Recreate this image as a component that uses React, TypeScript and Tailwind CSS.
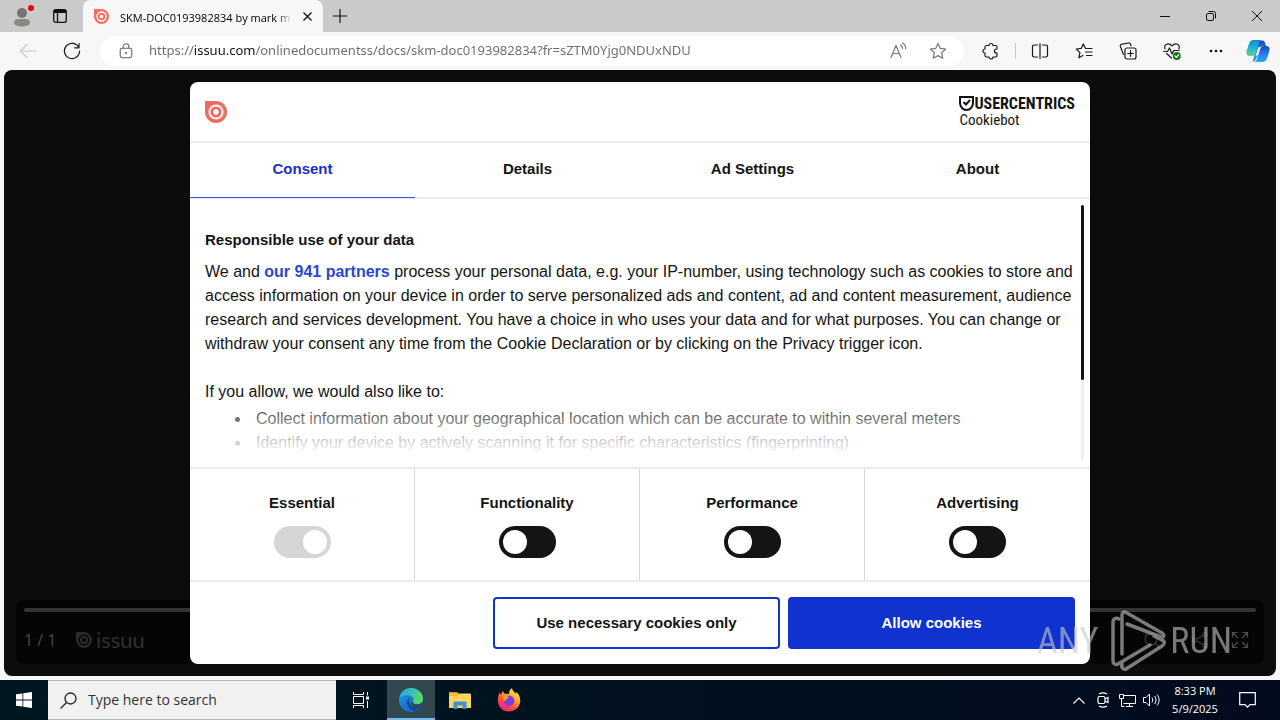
import { useState } from 'react';
import type { ReactNode } from 'react';

const tabs = ['Consent', 'Details', 'Ad Settings', 'About'];

const categories = [
  { name: 'Essential', locked: true },
  { name: 'Functionality', locked: false },
  { name: 'Performance', locked: false },
  { name: 'Advertising', locked: false },
];

interface IconButtonProps {
  label: string;
  className?: string;
  children: ReactNode;
}

function IconButton({ label, className = '', children }: IconButtonProps) {
  return (
    <button type="button" aria-label={label} className={`flex shrink-0 items-center justify-center ${className}`}>
      {children}
    </button>
  );
}

function IssuuMark({ className }: { className: string }) {
  return (
    <svg viewBox="0 0 22 22" className={className} fill="none" aria-hidden="true">
      <path d="M0 0h11a11 11 0 1 1-11 11z" fill="currentColor" />
      <circle cx="11" cy="11" r="6.6" stroke="var(--ring)" strokeWidth="2" />
      <circle cx="11" cy="11" r="2.7" fill="var(--ring)" />
    </svg>
  );
}

// Outline icons of the browser share one stroke setup
function Line({ size = 18, children, className = '' }: { size?: number; children: ReactNode; className?: string }) {
  return (
    <svg
      width={size}
      height={size}
      viewBox="0 0 18 18"
      fill="none"
      stroke="currentColor"
      strokeWidth="1.2"
      strokeLinecap="round"
      strokeLinejoin="round"
      className={className}
      aria-hidden="true"
    >
      {children}
    </svg>
  );
}

function TitleBar() {
  return (
    <header className="flex h-8 items-stretch bg-[#cacaca]">
      <div className="flex w-[83px] shrink-0 items-center rounded-br-md">
        <IconButton label="Profile" className="h-8 w-11">
          <svg width="24" height="24" viewBox="0 0 24 24" aria-hidden="true">
            <circle cx="12" cy="9" r="5" fill="#77736f" />
            <path d="M4 19c0-3 2-4 4-4h8c2 0 4 1 4 4 0 2-4 3.500-8 3.500S4 21 4 19z" fill="#8b8783" />
            <circle cx="21" cy="4" r="3" fill="#e00b0b" />
          </svg>
        </IconButton>
        <IconButton label="Tab actions" className="h-8 w-8">
          <svg width="14" height="14" viewBox="0 0 14 14" fill="none" stroke="#111" aria-hidden="true">
            <rect x="0.700" y="0.700" width="12.600" height="12.600" rx="2" strokeWidth="1.300" />
            <path d="M1 2.500h12" strokeWidth="3" />
            <path d="M4.500 3v10" strokeWidth="1.300" />
          </svg>
        </IconButton>
      </div>
      <div className="flex w-60 items-center rounded-t-lg bg-[#f7f7f7] pr-2 pl-[11px]">
        <IssuuMark className="size-[15px] shrink-0 text-[#f2705f] [--ring:#fff]" />
        <span className="ml-[11px] flex-1">
          <span className="bg-linear-to-r from-black from-91% to-[#e0e0e0] bg-clip-text text-[11px] whitespace-nowrap text-transparent">
            SKM-DOC0193982834 by mark m
          </span>
        </span>
        <IconButton label="Close tab" className="size-4">
          <svg width="9" height="9" viewBox="0 0 9 9" stroke="#111" strokeWidth="1.3" aria-hidden="true">
            <path d="M0.500 0.500l8 8M8.500 0.500l-8 8" />
          </svg>
        </IconButton>
      </div>
      <IconButton label="New tab" className="ml-px w-8">
        <svg width="14" height="14" viewBox="0 0 14 14" stroke="#111" strokeWidth="1.2" aria-hidden="true">
          <path d="M7 0v14M0 7h14" />
        </svg>
      </IconButton>
      <div className="ml-auto flex">
        <IconButton label="Minimize" className="w-[46px]">
          <svg width="10" height="10" viewBox="0 0 10 10" stroke="#111" aria-hidden="true">
            <path d="M0 5.500h10" />
          </svg>
        </IconButton>
        <IconButton label="Restore" className="w-[46px]">
          <svg width="10" height="10" viewBox="0 0 10 10" fill="none" stroke="#111" aria-hidden="true">
            <rect x="0.500" y="2.500" width="7" height="7" rx="1.500" />
            <path d="M2.500 0.500h5a2 2 0 0 1 2 2v5" />
          </svg>
        </IconButton>
        <IconButton label="Close" className="w-[46px]">
          <svg width="10" height="10" viewBox="0 0 10 10" stroke="#111" aria-hidden="true">
            <path d="M0 0l10 10M10 0L0 10" />
          </svg>
        </IconButton>
      </div>
    </header>
  );
}

function Toolbar() {
  return (
    <div className="flex h-[38px] items-center text-[#1b1b1b]">
      <IconButton label="Back" className="ml-1.5 w-11 text-[#c9c9c9]">
        <Line>
          <path d="M17 9H1.500M8 2.500L1.500 9 8 15.500" />
        </Line>
      </IconButton>
      <IconButton label="Refresh" className="w-11">
        <Line>
          <path d="M15.800 5.500A7.600 7.600 0 1 0 16.600 9M16 1.500v4.300h-4.300" />
        </Line>
      </IconButton>
      <div className="ml-1.5 flex h-[30px] flex-1 items-center rounded-full bg-white pr-1.5 pl-[18px]">
        <Line size={16} className="shrink-0 text-[#666]">
          <rect x="2.500" y="6" width="13" height="10.500" rx="1.800" />
          <path d="M5.800 6V4a3.200 3.200 0 0 1 6.400 0v2" />
          <circle cx="9" cy="11.200" r="0.500" fill="currentColor" />
        </Line>
        <input
          aria-label="Address"
          defaultValue="https://issuu.com/onlinedocumentss/docs/skm-doc0193982834?fr=sZTM0Yjg0NDUxNDU"
          className="ml-[15px] min-w-0 flex-1 bg-[linear-gradient(90deg,#6b6b6b_45px,#111_45px,#111_106px,#6b6b6b_106px)] bg-clip-text font-['Noto_Sans','Open_Sans',sans-serif] text-[13px] text-transparent outline-none"
        />
        <IconButton label="Read aloud" className="w-10 text-[#777]">
          <Line>
            <path d="M2 15.500L7 3.500l5 12M3.800 11.500h6.400M11.500 3c1.400.8 2 2.200 2 3.800M13.500 1c2.200 1.200 3.200 3.200 3.200 5.800" />
          </Line>
        </IconButton>
        <IconButton label="Add to favorites" className="w-10 text-[#777]">
          <Line>
            <path d="M9 1.500l2.300 4.900 5.300.7-3.900 3.700 1 5.400L9 13.600l-4.700 2.600 1-5.400L1.400 7.100l5.300-.7z" />
          </Line>
        </IconButton>
      </div>
      <div className="ml-[5px] flex items-center pr-0.5">
        <IconButton label="Extensions" className="w-11">
          <Line>
            <path d="M4.500 3.500H7a2 2 0 0 1 4 0h2.500a1.500 1.500 0 0 1 1.500 1.500v2h-.5a2 2 0 0 0 0 4h.5v2.500a1.500 1.500 0 0 1-1.500 1.500H11a2 2 0 0 1-4 0H4.500A1.500 1.500 0 0 1 3 13.500V11a2 2 0 0 1 0-4V5a1.500 1.500 0 0 1 1.500-1.500z" />
          </Line>
        </IconButton>
        <span className="mx-0.5 h-4 w-px bg-[#c9c9c9]" />
        <IconButton label="Split screen" className="w-11">
          <Line>
            <path d="M9 1.500v15M6.500 3H3.200A1.700 1.700 0 0 0 1.500 4.700v8.600A1.700 1.700 0 0 0 3.200 15h3.300M11.500 3h3.300a1.700 1.700 0 0 1 1.700 1.700v8.600a1.700 1.700 0 0 1-1.700 1.700h-3.300" />
          </Line>
        </IconButton>
        <IconButton label="Favorites" className="w-11">
          <Line>
            <path d="M11 6.500h-.5L8.300 2 6.200 6.400 1.300 7l3.600 3.600-1 5.200 4-2.300M12 6.500h5M10.500 10h6.500M11.500 13.500H17" />
          </Line>
        </IconButton>
        <IconButton label="Collections" className="w-11">
          <Line>
            <rect x="6" y="6" width="11" height="11" rx="2" />
            <path d="M11.500 8.700v5.600M8.700 11.500h5.600M4.500 12.500L1.300 4.300c-.3-1 .1-1.700 1-2L9.500 1c1-.2 1.700.3 2 1.200l.5 1.500" />
          </Line>
        </IconButton>
        <IconButton label="Browser essentials" className="w-11">
          <Line>
            <path d="M2 7C.8 3.500 3 1.800 5 1.800c2 0 3.200 1 4 2.200.8-1.200 2-2.200 4-2.200s4.200 1.700 3 5.200M.8 9.500h3.700L6.500 6l2.500 6 1.700-3.500h5.500M3.500 11.500L8.500 16" />
            <circle cx="13.800" cy="14" r="4" fill="#157a1c" stroke="none" />
            <path d="M12 14l1.300 1.300 2.300-2.400" stroke="#fff" />
          </Line>
        </IconButton>
        <IconButton label="Settings and more" className="w-11">
          <svg width="14" height="4" viewBox="0 0 14 4" fill="#111" aria-hidden="true">
            <circle cx="2" cy="2" r="1.300" />
            <circle cx="7" cy="2" r="1.300" />
            <circle cx="12" cy="2" r="1.300" />
          </svg>
        </IconButton>
        <IconButton label="Copilot" className="w-10">
          <svg width="24" height="24" viewBox="0 0 24 24" aria-hidden="true">
            <defs>
              <linearGradient id="cpA" x1="0" y1="0" x2="0" y2="1">
                <stop offset="0" stopColor="#1187d8" />
                <stop offset="0.500" stopColor="#23b5d3" />
                <stop offset="1" stopColor="#58d08b" />
              </linearGradient>
              <linearGradient id="cpB" x1="0" y1="0" x2="0" y2="1">
                <stop offset="0" stopColor="#1748b5" />
                <stop offset="0.500" stopColor="#2b7bea" />
                <stop offset="1" stopColor="#2aa7f5" />
              </linearGradient>
            </defs>
            <path d="M13 1.500h3.500c1.500 0 2.100 1 2.500 2.300L20 7h-3c-2 0-2.600 1-3.200 2.600L10.500 19c-.8 2.500-2 3.500-4 3.500" fill="url(#cpB)" />
            <path d="M7.500 1H16c-1.800.3-2.400 1.400-3 3.200l-3 9.300C9.200 16 8 17 6 17H3.500C.7 17-.1 14.600.8 11.500L3 4.800C3.800 2.300 5.200 1 7.500 1z" fill="url(#cpA)" />
            <path d="M16.500 23H8c1.800-.3 2.400-1.400 3-3.200l3-9.300C14.800 8 16 7 18 7h2.500c2.800 0 3.600 2.400 2.700 5.500L21 19.200c-.8 2.500-2.200 3.800-4.500 3.800z" fill="url(#cpB)" />
            <path d="M12.600 8h2l-3 8.500h-2z" fill="#eef6ff" />
          </svg>
        </IconButton>
      </div>
    </div>
  );
}

function ReaderControls() {
  return (
    <div className="m-3 flex h-16 flex-col rounded-lg bg-[#050505] px-2 pt-2 text-[#3a3a3a]">
      <div className="h-1 rounded-full bg-[#333]" />
      <div className="flex flex-1 items-center pt-1">
        <span className="w-[52px] text-base text-[#4a4a4a]">1 / 1</span>
        <IssuuMark className="size-4 text-[#2b2b2b] [--ring:#050505]" />
        <span className="ml-1 font-[Lato] text-[22px] leading-5 text-[#2f2f2f]">issuu</span>
        <div className="ml-auto flex">
          <IconButton label="Zoom" className="w-12">
            <Line>
              <circle cx="8" cy="8" r="6" />
              <path d="M12.500 12.500L17 17" />
            </Line>
          </IconButton>
          <IconButton label="Share" className="w-12">
            <Line>
              <circle cx="3.500" cy="9" r="2" />
              <circle cx="14" cy="3.500" r="2" />
              <circle cx="14" cy="14.500" r="2" />
              <path d="M5.500 8L12 4.500M5.500 10l6.500 3.500" />
            </Line>
          </IconButton>
          <IconButton label="Fullscreen" className="w-8">
            <Line className="text-[#505050]">
              <path d="M1.500 6V1.500H6M1.500 1.500l5 5M12 1.500h4.500V6M16.500 1.500l-5 5M1.500 12v4.500H6M1.500 16.500l5-5M12 16.500h4.500V12M16.500 16.500l-5-5" />
            </Line>
          </IconButton>
        </div>
      </div>
    </div>
  );
}

function CookieDialog() {
  const [active, setActive] = useState('Consent');

  return (
    <div
      role="dialog"
      aria-label="Cookie consent"
      className="w-full max-w-[900px] overflow-hidden rounded-lg bg-white font-['Liberation_Sans',Arial,sans-serif] text-[15px] leading-6 text-[#141414]"
    >
      <div className="flex h-[61px] items-center justify-between border-b-2 border-[#ebebeb] px-[15px]">
        <IssuuMark className="size-[22px] text-[#ee6a62] [--ring:#fff]" />
        <a href="#cookiebot" className="flex flex-col" aria-label="Usercentrics Cookiebot">
          <span className="flex items-center">
            <svg width="15" height="15" viewBox="0 0 15 15" fill="none" stroke="#141414" strokeWidth="2" aria-hidden="true">
              <path d="M1 1h13v6c0 4-3 7-6.500 7S1 11 1 7z" />
              <path d="M4.500 6l2.500 2.500L11 4" />
            </svg>
            <span className="font-['Roboto_Condensed','Liberation_Sans_Narrow','Roboto',sans-serif] text-base leading-4 font-bold">
              USERCENTRICS
            </span>
          </span>
          <span className="font-['Roboto_Condensed','Liberation_Sans_Narrow','Roboto',sans-serif] text-[15px] leading-4">
            Cookiebot
          </span>
        </a>
      </div>

      <div role="tablist" className="grid grid-cols-4 border-b-2 border-[#ebebeb]">
        {tabs.map((tab) => (
          <button
            key={tab}
            type="button"
            role="tab"
            aria-selected={active === tab}
            onClick={() => setActive(tab)}
            className={`-mb-px h-[55px] border-b pb-0.5 font-bold ${
              active === tab ? 'border-b-[#3d4fe0] text-[#1e2fc4]' : 'border-b-transparent'
            }`}
          >
            {tab}
          </button>
        ))}
      </div>

      <div className="relative flex h-[268px] overflow-hidden">
        <div className="flex-1 pt-[29px] pl-[15px]">
          <h2 className="mb-2 font-bold">Responsible use of your data</h2>
          <p className="text-base leading-6">
            We and{' '}
            <a href="#partners" className="font-bold text-[#2a47cf]">
              our 941 partners
            </a>{' '}
            process your personal data, e.g. your IP-number, using technology such as cookies to store and access
            information on your device in order to serve personalized ads and content, ad and content measurement,
            audience research and services development. You have a choice in who uses your data and for what purposes.
            You can change or withdraw your consent any time from the Cookie Declaration or by clicking on the Privacy
            trigger icon.
          </p>
          <p className="mt-6 text-base leading-6">If you allow, we would also like to:</p>
          <ul className="mt-[3px] list-disc pl-[46px] text-base leading-6">
            <li className="pl-[5px]">
              Collect information about your geographical location which can be accurate to within several meters
            </li>
            <li className="pl-[5px]">
              Identify your device by actively scanning it for specific characteristics (fingerprinting)
            </li>
          </ul>
        </div>
        <div className="mt-1.5 mr-1.5 mb-1.5 ml-1 w-[3px] rounded-full bg-[#f0f0f0]">
          <div className="h-[175px] rounded-full bg-[#141414]" />
        </div>
        <div className="pointer-events-none absolute right-4 bottom-0 left-0 h-[72px] bg-linear-to-t from-white from-18% to-white/0" />
      </div>

      <div className="grid grid-cols-4 border-y-2 border-[#ebebeb]">
        {categories.map(({ name, locked }) => (
          <label
            key={name}
            className="flex h-[111px] flex-col items-center gap-[11px] border-r border-[#d6d6d6] pt-[22px] font-bold last:border-r-0"
          >
            {name}
            <input
              type="checkbox"
              role="switch"
              defaultChecked={locked}
              disabled={locked}
              className="h-8 w-[57px] appearance-none rounded-full bg-[#141414] p-1 before:block before:size-6 before:rounded-full before:bg-white before:content-[''] checked:before:ml-auto disabled:bg-[#d6d6d6]"
            />
          </label>
        ))}
      </div>

      <div className="flex justify-end gap-2 px-[15px] pt-[15px] pb-[15px]">
        <button type="button" className="h-[52px] w-[287px] rounded border-2 border-[#1032cf] font-bold">
          Use necessary cookies only
        </button>
        <button type="button" className="h-[52px] w-[287px] rounded bg-[#1032cf] font-bold text-white">
          Allow cookies
        </button>
      </div>
    </div>
  );
}

function Watermark() {
  return (
    <div className="pointer-events-none absolute right-11 bottom-1 flex items-center gap-1 font-['Roboto_Condensed','Liberation_Sans_Narrow','Liberation_Sans',sans-serif] text-4xl text-[#c8c8c8] opacity-60">
      <span className="mr-2">ANY</span>
      <svg width="56" height="62" viewBox="0 0 56 62" fill="none" stroke="currentColor" strokeWidth="3.500" strokeLinejoin="round" strokeLinecap="round" aria-hidden="true">
        <path d="M9 9c-3-2-6 0-6 3v39c0 3 3 4 5 3l32-19" />
        <path d="M12 44V5c0-3 2-4 5-2l35 20c3 2 2 5-1 4L17 14" />
        <path d="M12 54c-1 3 1 6 4 5l36-23c3-2 3-5 0-6l-8-4" />
      </svg>
      <span>RUN</span>
    </div>
  );
}

function Taskbar() {
  return (
    <footer className="flex h-10 items-stretch bg-linear-to-r from-[#001720] to-[#020b1e] text-white">
      <IconButton label="Start" className="w-12">
        <svg width="16" height="16" viewBox="0 0 16 16" fill="#fff" aria-hidden="true">
          <path d="M0 2.300L6.500 1.400v6.200H0zM7.300 1.300L16 0v7.600H7.300zM0 8.400h6.500v6.200L0 13.700zM7.300 8.400H16V16l-8.700-1.300z" />
        </svg>
      </IconButton>
      <label className="flex w-72 items-center gap-[11px] border-y border-[#b5b5b5] bg-[#f1f1f1] pl-3 text-[#222]">
        <svg width="17" height="17" viewBox="0 0 17 17" fill="none" stroke="#222" strokeWidth="1.3" aria-hidden="true">
          <circle cx="10.500" cy="6.500" r="5.500" />
          <path d="M6.500 10.500L0.500 16.500" />
        </svg>
        <input
          aria-label="Search"
          placeholder="Type here to search"
          className="min-w-0 flex-1 bg-transparent text-sm outline-none placeholder:text-[#333]"
        />
      </label>
      <IconButton label="Task view" className="ml-px w-[50px] pr-1">
        <svg width="17" height="16" viewBox="0 0 17 16" fill="none" stroke="#fff" aria-hidden="true">
          <path d="M1.500 0v2.500h10V0M1.500 16v-2.500h10V16M1.500 4.500h10v7h-10zM15.500 0v3.500M15.500 9v7" />
          <path d="M14 4.500h3v3h-3z" fill="#fff" stroke="none" />
        </svg>
      </IconButton>
      <IconButton label="Microsoft Edge" className="w-12 border-b-2 border-[#76b9ed] bg-[#33474f] pt-0.5">
        <svg width="24" height="24" viewBox="0 0 24 24" aria-hidden="true">
          <defs>
            <linearGradient id="edgeTop" x1="0" y1="0.300" x2="1" y2="0.500">
              <stop offset="0" stopColor="#2aa5e0" />
              <stop offset="0.500" stopColor="#35c1b5" />
              <stop offset="1" stopColor="#62dc55" />
            </linearGradient>
            <linearGradient id="edgeLow" x1="0" y1="0" x2="0.700" y2="1">
              <stop offset="0" stopColor="#1b9de2" />
              <stop offset="1" stopColor="#1563bd" />
            </linearGradient>
          </defs>
          <circle cx="12" cy="12" r="12" fill="url(#edgeLow)" />
          <path d="M0.500 10C1.500 4 6.300 0 12 0c7 0 12 5.200 12 10.500 0 3.600-2.700 5.800-6 5.800-2.600 0-4.500-1-4.500-2 0-.7 1-1 1-2.800 0-2.200-2.300-4.300-5.500-4.300-3.500 0-6.500 1-8.500 2.800z" fill="url(#edgeTop)" />
          <path d="M9.500 10.500c-1.500 1-2.200 3-1.500 5.500 1 3.600 4.200 6.500 8 6.700 2.500-.8 4.600-2.400 6-4.700-5 2.600-11 .5-12-4.500-.2-1 0-2 .6-3z" fill="#134b96" />
          <path d="M14 13.500c-.8 1 .8 2.800 4 2.800 2.200 0 4-.9 5-2.300v3l-1 1.200c-4 2-9.500 1-9.800-3.200 0-1.500.8-2 1.800-1.500z" fill="#33474f" />
        </svg>
      </IconButton>
      <IconButton label="File Explorer" className="w-[49px]">
        <svg width="22" height="18" viewBox="0 0 22 18" aria-hidden="true">
          <path d="M0 1h8l1.500 2H0z" fill="#e09a1a" />
          <path d="M0 2.500h21a1 1 0 0 1 1 1V17H0z" fill="#fcd462" />
          <path d="M0 5L8.500 5l1.500-1.500H0z" fill="#f0b731" />
          <path d="M4.500 18v-6.500a1 1 0 0 1 1-1h11a1 1 0 0 1 1 1V18h-4v-3.500h-5V18z" fill="#3c94cf" />
        </svg>
      </IconButton>
      <IconButton label="Firefox" className="w-[49px]">
        <svg width="24" height="24" viewBox="0 0 24 24" aria-hidden="true">
          <defs>
            <linearGradient id="foxBody" x1="0.850" y1="0.050" x2="0.250" y2="0.950">
              <stop offset="0" stopColor="#fff04a" />
              <stop offset="0.400" stopColor="#ffa22c" />
              <stop offset="0.700" stopColor="#ff4a3c" />
              <stop offset="1" stopColor="#e4258c" />
            </linearGradient>
          </defs>
          <path d="M2.500 4.500L4 7l1.500-4L8 6c1.500-.4 3-.2 4 .2C12 3.500 13 1.300 15 0c.2 2.500 2 3.700 4 5.800l.5-1.800C22 6.500 23.500 10 23.200 13.200 22.700 19.200 18 23.500 12 23.500 5.500 23.500.8 18.700.8 12.500c0-3 .7-5.500 1.700-8z" fill="url(#foxBody)" />
          <circle cx="12" cy="12.800" r="5.300" fill="#7a3fe0" />
          <path d="M5.500 9c2-1.500 4.500-1.500 7 .3-1.200.3-2.500 1-2.700 2.200-1.500 0-2 1-1.500 2-2-.5-3-2.500-2.800-4.500z" fill="#ff9a2b" />
        </svg>
      </IconButton>

      <div className="ml-auto flex items-center">
        <IconButton label="Show hidden icons" className="w-6">
          <svg width="12" height="7" viewBox="0 0 12 7" fill="none" stroke="#fff" strokeWidth="1.2" aria-hidden="true">
            <path d="M0.500 6.500L6 1l5.500 5.500" />
          </svg>
        </IconButton>
        <IconButton label="Meet now" className="w-6">
          <svg width="14" height="16" viewBox="0 0 14 16" fill="none" stroke="#fff" strokeWidth="1.2" aria-hidden="true">
            <rect x="2" y="4.500" width="7" height="7" rx="1.500" />
            <path d="M9 7l3-1.500v5L9 9M3 2c2.500-1.500 5.500-1.500 8 0M3 14c2.500 1.500 5.500 1.500 8 0" />
          </svg>
        </IconButton>
        <IconButton label="Network" className="w-6">
          <svg width="17" height="15" viewBox="0 0 17 15" fill="none" stroke="#fff" aria-hidden="true">
            <path d="M5 2.500h11.500v8H4.500M10.500 10.500v3M7 13.500h7M0.500 1.500h4v4h-4zM2.500 5.500v8h3" />
          </svg>
        </IconButton>
        <IconButton label="Volume" className="w-6">
          <svg width="17" height="14" viewBox="0 0 17 14" fill="none" stroke="#fff" aria-hidden="true">
            <path d="M0.500 4.500h2.500L6.500 1v12L3 9.500H0.500zM9 4.500c1 1.500 1 3.500 0 5M11.500 3c2 2.500 2 5.500 0 8M14 1.500c2.800 3.500 2.800 7.500 0 11" />
          </svg>
        </IconButton>
        <div className="w-16 text-center text-[11px] leading-[18px]">
          <div>8:33 PM</div>
          <div>5/9/2025</div>
        </div>
        <IconButton label="Notifications" className="mr-[13px] w-10">
          <svg width="17" height="16" viewBox="0 0 17 16" fill="none" stroke="#fff" strokeWidth="1.2" aria-hidden="true">
            <path d="M0.700 0.700h15.600v12H11l-2.500 2.500L6 12.700H0.700z" />
          </svg>
        </IconButton>
      </div>
    </footer>
  );
}

export default function App() {
  return (
    <div className="flex min-h-screen flex-col bg-[#f7f7f7] font-['Open_Sans','Noto_Sans',sans-serif]">
      <TitleBar />
      <Toolbar />
      <main className="relative mx-1 mb-1 flex flex-1 flex-col justify-end overflow-hidden rounded-lg bg-[#0c0c0c]">
        <ReaderControls />
        <div className="absolute inset-0 flex items-center justify-center">
          <CookieDialog />
        </div>
        <Watermark />
      </main>
      <Taskbar />
    </div>
  );
}
